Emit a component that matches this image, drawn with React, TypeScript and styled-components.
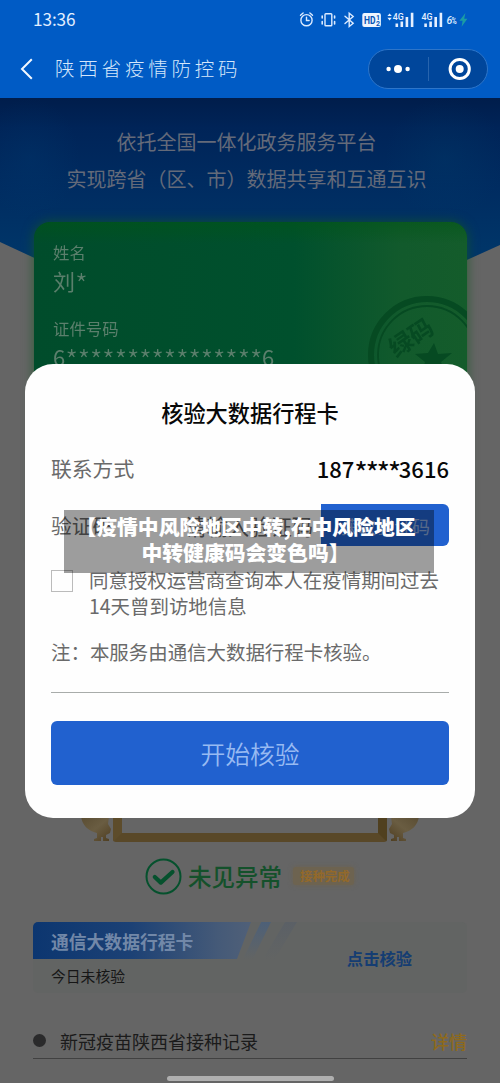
import React from "react";
import styled, { createGlobalStyle } from "styled-components";

const GlobalStyle = createGlobalStyle`
  * { box-sizing: border-box; }
  body {
    margin: 0;
    font-family: "Noto Sans CJK SC", "Noto Sans", sans-serif;
    font-weight: 400;
  }
`;

const Page = styled.div`
  position: relative;
  display: flex;
  flex-direction: column;
  width: 500px;
  height: 1083px;
  overflow: hidden;
  background: #656565;
`;

const Header = styled.header`
  display: flex;
  flex-direction: column;
  height: 98px;
  background: #005bc5;
`;

const StatusBar = styled.div`
  display: flex;
  align-items: center;
  justify-content: space-between;
  height: 40px;
  padding: 0 31px 0 33px;
`;

const Clock = styled.span`
  margin-top: -3px;
  font-size: 17.2px;
  font-weight: 400;
  letter-spacing: -0.1px;
  color: #e3efff;
`;

const NavBar = styled.nav`
  display: flex;
  align-items: center;
  height: 58px;
  padding: 0 12px 0 20px;
`;

const NavTitle = styled.h1`
  flex: 1;
  margin: -4px 0 0 21px;
  font-size: 19.5px;
  font-weight: 300;
  letter-spacing: 3.8px;
  color: #d5e7fb;
`;

const Capsule = styled.div`
  display: flex;
  align-items: center;
  width: 120px;
  height: 40px;
  border: 1px solid #2d75c9;
  border-radius: 20px;
  background: #00469b;
`;

const Body = styled.main`
  position: relative;
  display: flex;
  flex-direction: column;
  flex: 1;
  padding: 26px 33px 0;

  &::before {
    content: "";
    position: absolute;
    inset: 0 0 auto;
    height: 260px;
    background:
      radial-gradient(ellipse 50px 60px at 30px 60px, rgba(0, 70, 125, 0.18), transparent),
      radial-gradient(ellipse 60px 60px at 445px 60px, rgba(0, 70, 115, 0.22), transparent),
      linear-gradient(#001d4b 0, #002458 30px, #002c61 90px, #003568 150px);
    clip-path: polygon(0 0, 100% 0, 100% 147px, 50% 260px, 0 144px);
  }
`;

const Slogan = styled.p`
  position: relative;
  margin: 0 7px 0 0;
  text-align: center;
  white-space: nowrap;
  font-size: 20px;
  line-height: 36.5px;
  color: #646a79;
`;

const HealthCard = styled.section`
  position: relative;
  display: flex;
  flex-direction: column;
  height: 340px;
  margin: 25px 0 0 1px;
  padding: 17px 19px;
  overflow: hidden;
  border-radius: 16px;
  background:
    linear-gradient(rgba(0, 85, 20, 0.5), transparent 22px),
    linear-gradient(90deg, #004c2b 0, #00502d 60%, #125a2c 85%, #145c2b);
  color: #5b7f6c;
`;

const CardGlow = styled.div`
  position: relative;
  border-radius: 16px;
  filter: drop-shadow(0 0 6px rgba(20, 90, 35, 0.75));
`;

const FieldLabel = styled.span`
  font-size: 16.4px;
  line-height: 26px;
`;

const FieldValue = styled.span`
  font-size: 22px;
  line-height: 30px;
  margin-bottom: 20px;
`;

const Stars = styled.span<{ $tight: number; $weight: number }>`
  font-size: 29px;
  font-weight: ${(p) => p.$weight};
  line-height: 0;
  letter-spacing: ${(p) => p.$tight}px;
  vertical-align: -6px;
`;

const Stamp = styled.svg`
  position: absolute;
  right: -20px;
  top: 72px;
`;

const CodeArea = styled.section`
  display: flex;
  align-items: flex-end;
  justify-content: center;
  height: 280px;
`;

const CodeFrame = styled.div`
  width: 274px;
  height: 240px;
  border: 9px solid;
  border-color: #5d4c2b #50401f #594828 #5d4c2b;
  border-radius: 3px;
`;

const Result = styled.section`
  display: flex;
  align-items: center;
  height: 36px;
  margin: 16px 0 28px 112px;
`;

const ResultText = styled.strong`
  margin: 0 11px 0 6px;
  font-size: 23.5px;
  font-weight: 500;
  color: #14512b;
`;

const Tag = styled.span`
  padding: 0 4px 0 7px;
  border-radius: 3px;
  background: #6d6350;
  box-shadow: 0 0 5px #6d6350;
  font-size: 12.4px;
  font-weight: 700;
  line-height: 18px;
  color: #93692a;
`;

const TripCard = styled.section`
  display: flex;
  align-items: center;
  justify-content: space-between;
  height: 71px;
  padding-right: 55px;
  border-radius: 5px;
  background: #626463;
`;

const TripInfo = styled.div`
  display: flex;
  flex-direction: column;
  height: 100%;
`;

const TripHeading = styled.div`
  display: flex;
  height: 37px;
`;

const TripTitle = styled.h2`
  width: 218px;
  margin: 0;
  padding-left: 18px;
  border-radius: 5px 0 0 0;
  background: linear-gradient(90deg, #0c3670, #1c4175 45%, #455a78 85%, #506078);
  clip-path: polygon(0 0, 100% 0, calc(100% - 14px) 100%, 0 100%);
  font-size: 17.8px;
  font-weight: 700;
  line-height: 38px;
  color: #7288a8;
`;

const Stripe = styled.i<{ $tone: string; $width: number }>`
  width: ${(p) => p.$width}px;
  height: 37px;
  margin-left: -8px;
  background: linear-gradient(${(p) => p.$tone}, #626463);
  clip-path: polygon(65% 0, 100% 0, 35% 100%, 0 100%);
`;

const TripStatus = styled.span`
  padding-left: 18px;
  font-size: 14.8px;
  font-weight: 400;
  line-height: 33px;
  color: #161616;
`;

const TripLink = styled.a`
  margin-top: 1px;
  font-size: 16.3px;
  font-weight: 700;
  color: #153d72;
`;

const RecordRow = styled.section`
  display: flex;
  align-items: center;
  height: 36px;
  margin-top: 30px;
  border-bottom: 1px solid #414141;
  font-size: 18px;
  line-height: 26px;
  color: #1b1b1b;

  &::before {
    content: "";
    width: 13px;
    height: 13px;
    margin-right: 14px;
    border-radius: 50%;
    background: #2a2a2b;
  }
`;

const RecordLink = styled.a`
  margin-left: auto;
  font-weight: 500;
  color: #8e6a1c;
`;

const HomeIndicator = styled.div`
  align-self: center;
  width: 167px;
  height: 5px;
  margin-top: 17px;
  border-radius: 3px;
  background: #afafaf;
`;

const Dialog = styled.div`
  position: absolute;
  left: 25px;
  top: 364px;
  display: flex;
  flex-direction: column;
  width: 450px;
  height: 454px;
  padding: 31px 26px 33px;
  border-radius: 28px;
  background: #fefefe;
  color: #6a6a6a;
`;

const DialogTitle = styled.h2`
  margin: 0;
  text-align: center;
  font-size: 22.2px;
  font-weight: 500;
  line-height: 34px;
  color: #080808;
`;

const FormRow = styled.div<{ $gap: number }>`
  display: flex;
  align-items: center;
  height: 42px;
  margin-top: ${(p) => p.$gap}px;
  font-size: 20.8px;
`;

const Phone = styled.span`
  margin-left: auto;
  font-size: 22px;
  font-weight: 500;
  color: #080808;
`;

const CodeInput = styled.span`
  margin-left: auto;
  margin-right: 8px;
  font-size: 21.3px;
  color: #666;
`;

const SendButton = styled.button`
  width: 128px;
  height: 42px;
  padding: 2px 0 0;
  border: 0;
  border-radius: 0 6px 6px 0;
  background: #2161cf;
  font: 400 18px "Noto Sans CJK SC", sans-serif;
  color: #8aa9dd;
`;

const Consent = styled.label`
  display: flex;
  align-items: flex-start;
  margin-top: 22px;
  font-size: 19.45px;
  line-height: 25.5px;
`;

const Checkbox = styled.i`
  width: 22px;
  height: 22px;
  margin: 2px 16px 0 0;
  border: 1px solid #bbb;
`;

const ConsentText = styled.span`
  margin-top: -1px;
  white-space: nowrap;
`;

const Note = styled.p`
  margin: 19px 0 0;
  padding-bottom: 25px;
  border-bottom: 1px solid #a8acaa;
  font-size: 19.45px;
  line-height: 30px;
  white-space: nowrap;
`;

const StartButton = styled.button`
  height: 64px;
  margin-top: auto;
  padding: 0;
  border: 0;
  border-radius: 6px;
  background: #2161cf;
  font: 350 24.8px "Noto Sans CJK SC", sans-serif;
  color: #98baf2;
`;

const Caption = styled.div`
  position: absolute;
  left: 64px;
  top: 510px;
  width: 370px;
  height: 63px;
  padding: 3px 0 0;
  background: rgba(0, 0, 0, 0.38);
  text-align: center;
  white-space: nowrap;
  font-size: 20.8px;
  font-weight: 900;
  line-height: 26px;
  color: #fff;
`;

const CaptionLine = styled.div`
  margin-left: -7px;
`;

const StatusIcons = () => (
  <svg width="170" height="24" viewBox="299 8 170 24" fill="none" stroke="#dcebff" strokeWidth="1.4" strokeLinecap="round">
    <circle cx="306.5" cy="20.2" r="5.6" />
    <path d="M306.5 17.2v3.3h2.6M300.5 15.2l2.6-2.2M312.5 15.2l-2.6-2.2" />
    <rect x="325" y="13.8" width="6.8" height="12" rx="0.8" />
    <path d="M322.2 16v2m0 3.5v2.5M334.6 16v2m0 3.5v2.5" strokeWidth="1.6" />
    <path d="M345 16.2l8.2 7-4 3.3V13.2l4 3.3-8.2 7" />
    <rect x="362.3" y="13" width="18.6" height="14" rx="2" fill="#edf5ff" stroke="none" />
    <g stroke="none" fontFamily="Roboto, sans-serif" fontWeight="700">
      <text x="364" y="24" fontSize="10.5" textLength="11.5" lengthAdjust="spacingAndGlyphs" fill="#0755b5">HD</text>
      <text x="376" y="19.6" fontSize="7" fill="#0755b5">1</text>
      <text x="376" y="26" fontSize="7" fill="#0755b5">2</text>
      <text x="392.8" y="19.8" fontSize="9" fontWeight="500" textLength="11" lengthAdjust="spacingAndGlyphs" fill="#e4efff">4G</text>
      <text x="421.5" y="19.8" fontSize="9" fontWeight="500" textLength="11" lengthAdjust="spacingAndGlyphs" fill="#e4efff">4G</text>
      <text x="446.5" y="24" fontSize="10.5" fontStyle="italic" fontWeight="500" fill="#dcebff">6</text>
      <text x="451.6" y="23.6" fontSize="9" textLength="5.2" lengthAdjust="spacingAndGlyphs" fill="#dcebff">%</text>
    </g>
    <g fill="#e4efff" stroke="none">
      <path d="M387.4 16l2.2-2.6 2.2 2.6zM387.4 17.8l2.2 2.6 2.2-2.6z" />
      <path d="M395.5 23.5h2.6V27h-2.6zM400.5 21.5h2.6V27h-2.6zM405.6 17h2.6v10h-2.6zM410.8 12.8h2.6V27h-2.6z" />
      <path d="M424.3 23.5h2.6V27h-2.6zM429.3 21.5h2.6V27h-2.6zM434.4 17h2.6v10h-2.6zM439.6 12.8h2.6V27h-2.6z" />
    </g>
    <path d="M465.4 13l-6 7.8h3.2l-1 6 5.8-8h-3.2z" fill="#1b9ca4" stroke="none" />
  </svg>
);

const BackIcon = () => (
  <svg width="14" height="24" viewBox="0 0 14 24" fill="none" stroke="#f2f8ff" strokeWidth="2">
    <path d="M11.8 2.2L2 12l9.8 9.8" />
  </svg>
);

const CapsuleIcons = () => (
  <svg width="118" height="38" viewBox="369 50 118 38">
    <g fill="#fff">
      <circle cx="388.6" cy="69" r="2.2" />
      <circle cx="398" cy="69" r="4" />
      <circle cx="407.6" cy="69" r="2.2" />
      <circle cx="459.7" cy="69" r="4" />
    </g>
    <path d="M428.5 57v24" stroke="#2764ae" />
    <circle cx="459.7" cy="69" r="9.6" fill="none" stroke="#fff" strokeWidth="3" />
  </svg>
);

const GreenStamp = () => (
  <Stamp width="120" height="120" viewBox="0 0 120 120">
    <g fill="none" stroke="#064a22">
      <circle cx="60" cy="61" r="56" strokeWidth="6" />
      <circle cx="60" cy="61" r="49" strokeWidth="1.8" />
    </g>
    <g fill="#064a22">
      <text x="20" y="53" fontSize="24" fontWeight="700" transform="rotate(-34 43 44)">绿码</text>
      <path d="M67 49l4 11 14-1-11 9 5 14-13-8-12 8 4-14-10-8 13-1z" />
    </g>
  </Stamp>
);

const Mascot = ({ flip = false }: { flip?: boolean }) => (
  <svg width="32" height="26" viewBox="0 0 32 26">
    <defs>
      <linearGradient id={flip ? "goldR" : "goldL"} x1="0" x2="1" y1="0" y2="1">
        <stop offset="0" stopColor="#594c32" />
        <stop offset=".5" stopColor="#6a5d42" />
        <stop offset="1" stopColor="#4e3d20" />
      </linearGradient>
    </defs>
    <path
      d="M0 0h28l-1 8 3 5-1 4-4 2v3l3 1v2h-6v-4h-2v4h-7v-2l3-1v-5C7 15 1 9 0 0z"
      transform={flip ? "translate(32 0) scale(-1 1)" : undefined}
      fill={`url(#${flip ? "goldR" : "goldL"})`}
    />
  </svg>
);

const CheckIcon = () => (
  <svg width="37" height="37" viewBox="0 0 37 37" fill="none" stroke="#05512d">
    <circle cx="18.5" cy="18.5" r="17" strokeWidth="2" />
    <path d="M9.8 19l6 5.6L27.5 14" strokeWidth="4.2" strokeLinecap="round" strokeLinejoin="round" />
  </svg>
);

export default function App() {
  return (
    <Page>
      <GlobalStyle />
      <Header>
        <StatusBar>
          <Clock>13:36</Clock>
          <StatusIcons />
        </StatusBar>
        <NavBar>
          <BackIcon />
          <NavTitle>陕西省疫情防控码</NavTitle>
          <Capsule>
            <CapsuleIcons />
          </Capsule>
        </NavBar>
      </Header>

      <Body>
        <Slogan>依托全国一体化政务服务平台</Slogan>
        <Slogan>实现跨省（区、市）数据共享和互通互识</Slogan>
        <CardGlow>
          <HealthCard>
            <FieldLabel>姓名</FieldLabel>
            <FieldValue>
              刘<Stars $tight={0} $weight={300}>*</Stars>
            </FieldValue>
            <FieldLabel>证件号码</FieldLabel>
            <FieldValue>
              6<Stars $tight={-0.55} $weight={300}>****************</Stars>6
            </FieldValue>
            <GreenStamp />
          </HealthCard>
        </CardGlow>
        <CodeArea>
          <Mascot />
          <CodeFrame />
          <Mascot flip />
        </CodeArea>
        <Result>
          <CheckIcon />
          <ResultText>未见异常</ResultText>
          <Tag>接种完成</Tag>
        </Result>
        <TripCard>
          <TripInfo>
            <TripHeading>
              <TripTitle>通信大数据行程卡</TripTitle>
              <Stripe $tone="#4d6078" $width={28} />
              <Stripe $tone="#5b6066" $width={34} />
            </TripHeading>
            <TripStatus>今日未核验</TripStatus>
          </TripInfo>
          <TripLink>点击核验</TripLink>
        </TripCard>
        <RecordRow>
          新冠疫苗陕西省接种记录
          <RecordLink>详情</RecordLink>
        </RecordRow>
        <HomeIndicator />
      </Body>

      <Dialog role="dialog">
        <DialogTitle>核验大数据行程卡</DialogTitle>
        <FormRow $gap={18}>
          联系方式
          <Phone>
            187<Stars $tight={-2.4} $weight={400}>****</Stars>3616
          </Phone>
        </FormRow>
        <FormRow $gap={15}>
          验证码
          <CodeInput>请输入验证码</CodeInput>
          <SendButton>获取验证码</SendButton>
        </FormRow>
        <Consent>
          <Checkbox />
          <ConsentText>
            同意授权运营商查询本人在疫情期间过去
            <br />
            14天曾到访地信息
          </ConsentText>
        </Consent>
        <Note>注：本服务由通信大数据行程卡核验。</Note>
        <StartButton>开始核验</StartButton>
      </Dialog>

      <Caption>
        <CaptionLine>【疫情中风险地区中转,在中风险地区</CaptionLine>
        <CaptionLine>中转健康码会变色吗】</CaptionLine>
      </Caption>
    </Page>
  );
}
